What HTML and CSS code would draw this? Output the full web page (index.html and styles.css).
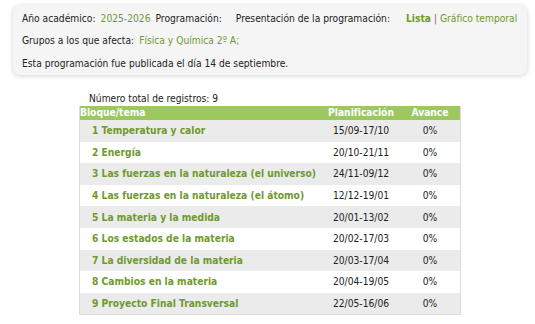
FILE: index.html
```html
<!DOCTYPE html>
<html lang="es">
<head>
<meta charset="utf-8">
<link rel="stylesheet" href="styles.css">
</head>
<body>
<div class="card">
  <div class="line">
    <span>Año académico:</span><span class="val">2025-2026</span>
    <span>Programación:</span>
    <span class="pres">Presentación de la programación:</span>
    <span class="links"><b class="lnk">Lista</b> <span class="sep">|</span> <span class="lnk">Gráfico temporal</span></span>
  </div>
  <div class="line">
    <span>Grupos a los que afecta:</span><span class="val">Física y Química 2º A;</span>
  </div>
  <div class="line">
    <span>Esta programación fue publicada el día 14 de septiembre.</span>
  </div>
</div>
<div class="wrap">
  <div class="total">Número total de registros: 9</div>
  <table class="grid">
    <thead>
      <tr><th class="c1">Bloque/tema</th><th class="c2">Planificación</th><th class="c3">Avance</th></tr>
    </thead>
    <tbody>
      <tr><td class="c1">1 Temperatura y calor</td><td class="c2">15/09-17/10</td><td class="c3">0%</td></tr>
      <tr><td class="c1">2 Energía</td><td class="c2">20/10-21/11</td><td class="c3">0%</td></tr>
      <tr><td class="c1">3 Las fuerzas en la naturaleza (el universo)</td><td class="c2">24/11-09/12</td><td class="c3">0%</td></tr>
      <tr><td class="c1">4 Las fuerzas en la naturaleza (el átomo)</td><td class="c2">12/12-19/01</td><td class="c3">0%</td></tr>
      <tr><td class="c1">5 La materia y la medida</td><td class="c2">20/01-13/02</td><td class="c3">0%</td></tr>
      <tr><td class="c1">6 Los estados de la materia</td><td class="c2">20/02-17/03</td><td class="c3">0%</td></tr>
      <tr><td class="c1">7 La diversidad de la materia</td><td class="c2">20/03-17/04</td><td class="c3">0%</td></tr>
      <tr><td class="c1">8 Cambios en la materia</td><td class="c2">20/04-19/05</td><td class="c3">0%</td></tr>
      <tr><td class="c1">9 Proyecto Final Transversal</td><td class="c2">22/05-16/06</td><td class="c3">0%</td></tr>
    </tbody>
  </table>
</div>
</body>
</html>
```
FILE: styles.css
```css
html, body {
  margin: 0;
  padding: 0;
  background: #ffffff;
}
body {
  font-family: "DejaVu Sans Condensed", "DejaVu Sans", sans-serif;
  font-size: 10.2px;
  color: #222;
}
.card {
  box-sizing: border-box;
  margin: 5px 8px 0 13px;
  height: 70px;
  background: #f5f5f5;
  border-radius: 7px;
  box-shadow: 0 1px 5px rgba(0,0,0,0.18);
  padding: 6px 4px 5px 9px;
  display: flex;
  flex-direction: column;
  gap: 8.5px;
}
.line {
  display: flex;
  align-items: center;
  height: 14px;
  white-space: nowrap;
}
.line > span {
  flex-shrink: 0;
}
.val {
  color: #6f9a2e;
  margin-left: 5px;
  margin-right: 5px;
}
.pres {
  margin-left: 14px;
}
.links {
  margin-left: 16px;
}
.lnk {
  color: #6f9a2e;
}
b.lnk {
  font-weight: bold;
}
.sep {
  color: #a8506d;
}
.wrap {
  margin: 17px 0 0 79px;
  width: 382px;
}
.total {
  padding-left: 10px;
  height: 14px;
  line-height: 14px;
}
.grid {
  width: 382px;
  border-collapse: collapse;
  border: 1px solid #dcdcdc;
  border-top: none;
  table-layout: fixed;
}
.grid th {
  background: #9cc85e;
  color: #fff;
  font-weight: bold;
  height: 14px;
  padding: 0;
  line-height: 14px;
  white-space: nowrap;
}
.grid th.c1 { text-align: left; }
.grid td {
  height: 21.6px;
  padding: 0;
  white-space: nowrap;
}
.grid tbody tr:nth-child(odd) { background: #ebebeb; }
.grid tbody tr:nth-child(even) { background: #ffffff; }
.grid td.c1 {
  color: #6f9a2e;
  font-weight: bold;
  padding-left: 12px;
}
.grid .c2 { width: 72px; text-align: center; padding-left: 4px; }
.grid .c3 { width: 60px; text-align: center; padding-left: 3px; }
```
